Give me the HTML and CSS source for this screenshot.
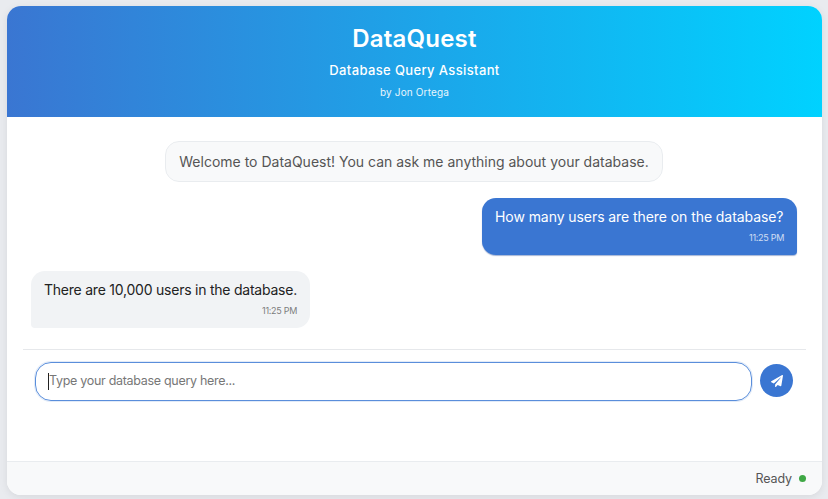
FILE: index.html
```html
<!DOCTYPE html>
<html lang="en">
<head>
<meta charset="utf-8">
<title>DataQuest</title>
<link rel="stylesheet" href="styles.css">
</head>
<body>
<main class="app">
  <header class="header">
    <h1 class="title">DataQuest</h1>
    <p class="subtitle">Database Query Assistant</p>
    <p class="author">by Jon Ortega</p>
  </header>
  <section class="chat">
    <div class="msg system">Welcome to DataQuest! You can ask me anything about your database.</div>
    <div class="msg user">
      <div class="text">How many users are there on the database?</div>
      <div class="time">11:25 PM</div>
    </div>
    <div class="msg bot">
      <div class="text">There are 10,000 users in the database.</div>
      <div class="time">11:25 PM</div>
    </div>
  </section>
  <form class="composer">
    <div class="input"><span class="caret"></span><span class="placeholder">Type your database query here...</span></div>
    <button class="send" type="button" aria-label="Send">
      <svg viewBox="0 0 512 512" width="12" height="12"><path fill="#fff" d="M476 3.2 12.5 270.6c-18.1 10.4-15.8 35.6 2.2 43.2L121 358.4l287.3-253.2c5.500-4.900 13.300 2.600 8.600 8.300L176 407v80.500c0 23.600 28.500 32.900 42.500 15.800L282 426l124.600 52.200c14.200 6 30.400-2.900 33-18.200l72-432C515 7.800 493.300-6.800 476 3.200z"/></svg>
    </button>
  </form>
  <footer class="status">
    <span class="status-text">Ready</span>
    <span class="dot"></span>
  </footer>
</main>
</body>
</html>
```
FILE: styles.css
```css
* { box-sizing: border-box; }
html, body { height: 100%; }
body {
  margin: 0;
  padding: 6px 6px 4px 7px;
  background: #e9ebef;
  font-family: "Inter", "Open Sans", "Liberation Sans", sans-serif;
  overflow: hidden;
}
.app {
  height: 489px;
  background: #fff;
  border-radius: 14px;
  overflow: hidden;
  display: flex;
  flex-direction: column;
  box-shadow: 0 2px 8px rgba(0,0,0,.08);
}
.header {
  height: 111px;
  flex: none;
  background: linear-gradient(90deg, #3a76d2 0%, #00d2ff 100%);
  color: #fff;
  text-align: center;
  padding-top: 18px;
}
.title { margin: 0; font-size: 24px; line-height: 30px; font-weight: 600; letter-spacing: .2px; }
.subtitle { margin: 6px 0 0; font-size: 13px; line-height: 20px; font-weight: 500; letter-spacing: .37px; }
.author { margin: 5px 0 0; font-size: 10px; line-height: 14px; opacity: .9; letter-spacing: .15px; }
.chat {
  height: 233px;
  flex: none;
  margin: 0 16px;
  padding: 24px 9px 0 8px;
  display: flex;
  flex-direction: column;
  border-bottom: 1px solid #e6e8eb;
}
.msg { border-radius: 14px; font-size: 14px; line-height: 21px; }
.system {
  align-self: center;
  width: 498px;
  height: 41px;
  padding: 9px 0 0;
  text-align: center;
  background: #f8f9fa;
  border: 1px solid #e9ecef;
  color: #555;
}
.user {
  align-self: flex-end;
  margin-top: 16px;
  width: 315px;
  height: 57px;
  padding: 8px 13px 0;
  background: #3a76d2;
  color: #fff;
  border-bottom-right-radius: 4px;
  box-shadow: 0 1px 1px rgba(30,70,150,.4);
}
.bot {
  align-self: flex-start;
  margin-top: 16px;
  width: 279px;
  height: 57px;
  padding: 8px 13px 0;
  background: #f1f3f5;
  color: #222;
  border-bottom-left-radius: 4px;
}
.text { white-space: nowrap; }
.user .text { letter-spacing: -.07px; }
.bot .text { letter-spacing: -.23px; }
.time { font-size: 9px; line-height: 12px; margin-top: 5px; text-align: right; opacity: .75; letter-spacing: -.3px; }
.bot .time { color: #555; }
.composer {
  flex: none;
  height: 111px;
  padding: 12px 29px 0 28px;
  display: flex;
  gap: 8px;
  align-items: flex-start;
}
.input {
  flex: 1;
  height: 39px;
  border: 1px solid #5a8edb;
  border-radius: 16px;
  box-shadow: 0 0 0 1px rgba(58,118,210,.15);
  display: flex;
  align-items: center;
  padding-left: 12px;
  font-size: 12.500px;
  letter-spacing: -.3px;
  color: #777;
}
.placeholder { margin-bottom: 2px; }
.caret { width: 1px; height: 17px; background: #222; flex: none; }
.send {
  width: 33px;
  height: 33px;
  margin-top: 2px;
  flex: none;
  padding: 0;
  border: 0;
  border-radius: 50%;
  background: #3a76d2;
  display: flex;
  align-items: center;
  justify-content: center;
}
.status {
  flex: 1;
  background: #f8f9fa;
  border-top: 1px solid #e9ecef;
  display: flex;
  align-items: center;
  justify-content: flex-end;
  gap: 7px;
  padding-right: 16px;
  font-size: 12.500px;
  letter-spacing: -.1px;
  color: #555;
}
.dot { width: 7px; height: 7px; border-radius: 50%; background: #3fa845; }
```
